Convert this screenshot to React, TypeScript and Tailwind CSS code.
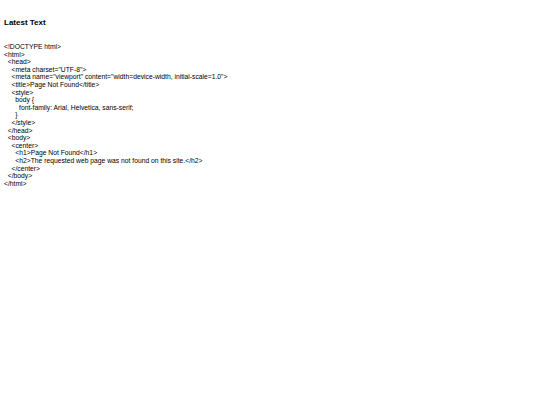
const code = `<!DOCTYPE html>
<html>
  <head>
    <meta charset="UTF-8">
    <meta name="viewport" content="width=device-width, initial-scale=1.0">
    <title>Page Not Found</title>
    <style>
      body {
        font-family: Arial, Helvetica, sans-serif;
      }
    </style>
  </head>
  <body>
    <center>
      <h1>Page Not Found</h1>
      <h2>The requested web page was not found on this site.</h2>
    </center>
  </body>
</html>`;

export default function App() {
  return (
    <div className="min-h-screen w-full bg-white px-[4px] pt-[18px] text-black font-['Liberation_Sans',Arial,sans-serif]">
      <h3 className="text-[8px] font-bold leading-[9px]">Latest Text</h3>
      <pre className="mt-[16px] whitespace-pre text-[6.75px] leading-[7.6px] font-['Liberation_Sans',Arial,sans-serif]">
        {code}
      </pre>
    </div>
  );
}
